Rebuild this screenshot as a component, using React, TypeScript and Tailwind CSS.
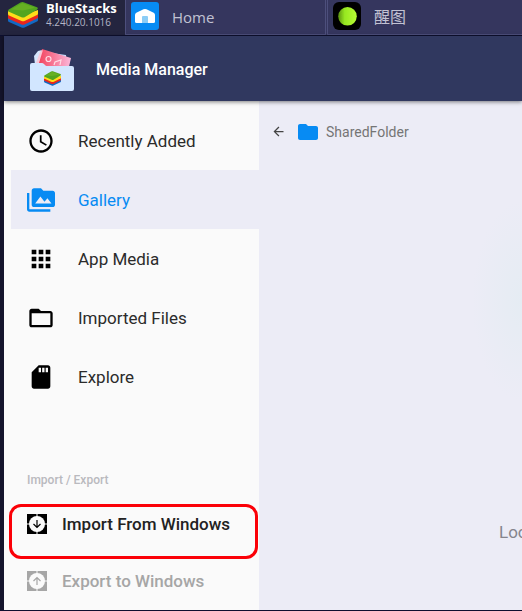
import type { IconType } from "react-icons";
import {
  MdAccessTime,
  MdApps,
  MdArrowBack,
  MdFolder,
  MdFolderOpen,
  MdPermMedia,
  MdSdCard,
} from "react-icons/md";
import clsx from "clsx";

type NavItem = { label: string; icon: IconType; active?: boolean };

const navItems: NavItem[] = [
  { label: "Recently Added", icon: MdAccessTime },
  { label: "Gallery", icon: MdPermMedia, active: true },
  { label: "App Media", icon: MdApps },
  { label: "Imported Files", icon: MdFolderOpen },
  { label: "Explore", icon: MdSdCard },
];

function StackLogo({ className }: { className?: string }) {
  return (
    <svg viewBox="0 0 30 26" className={className} aria-hidden="true">
      <path d="M0 15.5v3q0 1 1 1.500l12.500 5.500q1.500.6 3 0l12.500-6q1-.5 1-1.500v-3l-15 5z" fill="#1269c4" />
      <path d="M0 12.500v3q0 1 1 1.500l12.500 5.500q1.500.6 3 0l12.500-6q1-.5 1-1.500v-3l-15 5z" fill="#e8261d" />
      <path d="M0 9v3q0 1 1 1.500l12.500 5.500q1.500.6 3 0l12.500-6q1-.5 1-1.500V8l-15 5z" fill="#ffdc1a" />
      <path d="M.8 7.500 12.500.6q1.500-.8 3-.3L29 5.200q1.500 1 .2 2.300L17 15q-1.500.9-3.500.2L.9 9.800q-1.500-1-.1-2.300z" fill="#52a51f" />
      <path d="M3 7.500 13.500 1.500q.8-.4 1.800-.1L27 5.800 15 8.500z" fill="#66b023" />
    </svg>
  );
}

function HomeLogo() {
  return (
    <svg viewBox="0 0 28 28" className="size-7 shrink-0" aria-hidden="true">
      <rect width="28" height="28" rx="3" fill="#078bf3" />
      <path d="M4 13q0-1.500 1.300-2.300L12.500 7.300q1.500-.7 3 0l7.200 3.400Q24 11.500 24 13v6.500q0 1.500-1.500 1.500h-17Q4 21 4 19.500z" fill="#fff" />
      <path d="M11 15q0-1 1-1h4q1 0 1 1v6h-6z" fill="#8ccdf6" />
    </svg>
  );
}

function GlowLogo() {
  return (
    <svg viewBox="0 0 28 28" className="size-7 shrink-0" aria-hidden="true">
      <defs>
        <linearGradient id="glow" x1="0" x2="1">
          <stop offset="0" stopColor="#5a9212" />
          <stop offset=".35" stopColor="#97e821" />
          <stop offset="1" stopColor="#b8fb35" />
        </linearGradient>
        <filter id="soft">
          <feGaussianBlur stdDeviation=".7" />
        </filter>
      </defs>
      <rect width="28" height="28" rx="6" fill="#000" />
      <circle cx="14.500" cy="14.300" r="9.300" fill="url(#glow)" filter="url(#soft)" />
    </svg>
  );
}

function MediaLogo() {
  return (
    <svg viewBox="0 0 44 44" className="size-11 shrink-0" aria-hidden="true">
      <defs>
        <linearGradient id="photo" x1="0" x2="1">
          <stop offset="0" stopColor="#f23d57" />
          <stop offset="1" stopColor="#fbb9dc" />
        </linearGradient>
      </defs>
      <path d="M4 8 8 3l4-1 4 15H5z" fill="#d5e5fb" />
      <path d="m22 5 14 2 1 12H20z" fill="#c6daf8" />
      <path d="m12 1 29 9-3 13-31-2z" fill="url(#photo)" />
      <path d="M10 4 6 15l2 3 5-16z" fill="#f9c9d8" />
      <circle cx="18.500" cy="11" r="2.500" fill="none" stroke="#ffdbe5" strokeWidth="1.200" />
      <path d="m24 17 1-3 6-2-1 5" fill="none" stroke="#ffdbe5" strokeWidth="1.200" />
      <path d="M0 17q0-2 2-2h10q1 0 2 1l1.500 1.500q1 .5 2 .5H42q2 0 2 2v21q0 2-2 2H2q-2 0-2-2z" fill="#d2e6ff" />
      <svg x="14" y="23" width="17" height="15">
        <StackLogo />
      </svg>
    </svg>
  );
}

// Square glyph with a round cut-out and an arrow pointing in or out.
function TransferIcon({ up }: { up?: boolean }) {
  return (
    <svg viewBox="0 0 20 20" className="size-5 shrink-0" aria-hidden="true">
      <path d="M0 0h20v20H0z" fill="currentColor" />
      <circle cx="10" cy="10" r="8" fill="#fafafa" />
      <path d="M10 0v4M10 16v4M0 10h4M16 10h4" stroke="#fafafa" />
      <path
        d={up ? "M10 14V6.500M6.500 10 10 6.500l3.500 3.500" : "M10 6v7.500M6.500 10l3.500 3.500 3.500-3.500"}
        fill="none"
        stroke="currentColor"
        strokeWidth="1.200"
      />
    </svg>
  );
}

function TabBar() {
  return (
    <div className="flex h-9 items-stretch border-b border-[#0e1030] bg-[#35365e]">
      <div className="flex w-[125px] shrink-0 gap-2 bg-[#24253f] pl-2">
        <StackLogo className="mt-0.5 h-[26px] w-[30px] shrink-0" />
        <div className="text-white">
          <div className="font-['Open_Sans',sans-serif] text-[13px] leading-4 font-bold">BlueStacks</div>
          <div className="font-['Open_Sans',sans-serif] text-[10px] leading-3 text-[#b4b5c6]">4.240.20.1016</div>
        </div>
      </div>
      <button className="flex w-[201px] shrink-0 gap-[13px] border-r border-b border-l border-[#4d4f7c] pt-0.5 pl-[5px] text-left">
        <HomeLogo />
        <span className="font-['Open_Sans',sans-serif] text-[15px] leading-[30px] text-[#c1c2d3]">Home</span>
      </button>
      <button className="ml-px flex min-w-0 flex-1 gap-[13px] border-b border-l border-[#4d4f7c] pt-0.5 pl-[5px] text-left">
        <GlowLogo />
        <span className="font-['Noto_Sans_CJK_SC',sans-serif] text-base leading-[29px] text-[#c1c2d3]">醒图</span>
      </button>
    </div>
  );
}

function Sidebar() {
  return (
    <aside className="w-[255px] shrink-0 bg-[#fafafa] pt-[10px] pl-[7px]">
      <nav>
        {navItems.map(({ label, icon: Icon, active }) => (
          <a
            key={label}
            href="#"
            className={clsx(
              "flex h-[59px] items-center gap-[23px] pl-4 text-[17px]",
              active ? "bg-[#ececf6] text-[#078bf3]" : "text-[#2b2b2b]",
            )}
          >
            <Icon size={28} className={active ? "text-[#078bf3]" : "text-black"} />
            <span className="pt-0.5">{label}</span>
          </a>
        ))}
      </nav>

      <h2 className="mt-[66px] pl-4 text-xs leading-4 font-medium text-[#b9b9be]">Import / Export</h2>
      <div className="relative mt-4 h-[55px]">
        <button className="flex h-10 w-full items-center gap-[15px] pl-4 text-[17px] font-medium text-[#222]">
          <span className="text-black">
            <TransferIcon />
          </span>
          <span className="pt-0.5">Import From Windows</span>
        </button>
        <div className="pointer-events-none absolute inset-y-0 right-px -left-0.5 rounded-xl border-3 border-[#fb0007]" />
      </div>
      <button
        disabled
        className="mt-0.5 flex h-10 w-full items-center gap-[15px] pl-4 text-[17px] font-medium text-[#a6a6a6]"
      >
        <TransferIcon up />
        <span className="pt-0.5">Export to Windows</span>
      </button>
    </aside>
  );
}

export default function App() {
  return (
    <div className="flex min-h-screen flex-col overflow-hidden bg-[#0e1030] pb-px font-[Roboto,sans-serif]">
      <TabBar />
      <div className="flex flex-1 flex-col border-l-4 border-[#14142c]">
        <header className="z-10 flex h-[65px] items-center gap-[22px] bg-[#30385f] pt-0.5 pl-[26px] shadow-[0_1px_4px_rgba(0,0,0,0.5)]">
          <MediaLogo />
          <h1 className="text-base font-medium text-white">Media Manager</h1>
        </header>
        <div className="flex flex-1">
          <Sidebar />
          <main className="flex min-w-0 flex-1 flex-col overflow-hidden bg-[#ececf6] bg-[radial-gradient(ellipse_50px_100px_at_100%_200px,#e5ecf3,#ececf6)]">
            <div className="flex h-[60px] items-center pt-px pl-3 text-sm text-[#757575]">
              <button aria-label="Back" className="text-[#444]">
                <MdArrowBack size={15} />
              </button>
              <MdFolder size={24} className="ml-2.5 text-[#078bf3]" />
              <span className="ml-1.5">SharedFolder</span>
            </div>
            <p className="mt-[361px] ml-60 text-[17px] leading-5 whitespace-nowrap text-[#85858d]">Loo</p>
          </main>
        </div>
      </div>
    </div>
  );
}
